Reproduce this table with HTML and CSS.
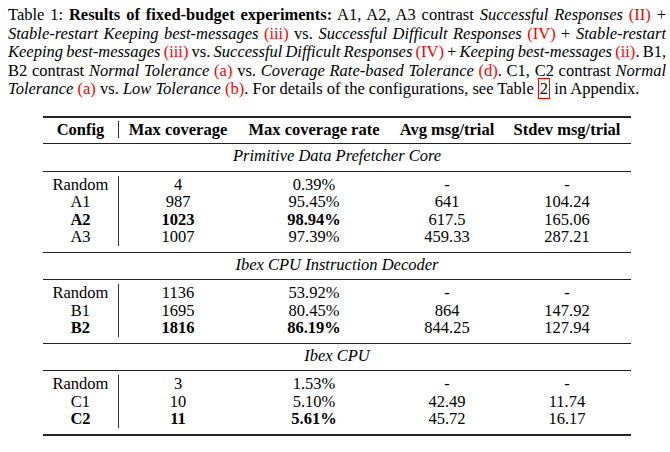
FILE: index.html
```html
<!DOCTYPE html>
<html>
<head>
<meta charset="utf-8">
<link rel="stylesheet" href="styles.css">
</head>
<body>
<div class="caption">
  <span class="line">Table 1: <b>Results of fixed-budget experiments:</b> A1, A2, A3 contrast <i>Successful Responses</i> <span class="ref">(II)</span> +</span>
  <span class="line"><i>Stable-restart Keeping best-messages</i> <span class="ref">(iii)</span> vs. <i>Successful Difficult Responses</i> <span class="ref">(IV)</span> + <i>Stable-restart</i></span>
  <span class="line"><i>Keeping best-messages</i> <span class="ref">(iii)</span> vs. <i>Successful Difficult Responses</i> <span class="ref">(IV)</span> + <i>Keeping best-messages</i> <span class="ref">(ii)</span>. B1,</span>
  <span class="line">B2 contrast <i>Normal Tolerance</i> <span class="ref">(a)</span> vs. <i>Coverage Rate-based Tolerance</i> <span class="ref">(d)</span>. C1, C2 contrast <i>Normal</i></span>
  <span class="line last"><i>Tolerance</i> <span class="ref">(a)</span> vs. <i>Low Tolerance</i> <span class="ref">(b)</span>. For details of the configurations, see Table <span class="box">2</span> in Appendix.</span>
</div>

<div class="tbl">
  <div class="grid head">
    <div class="c first">Config</div>
    <div class="c">Max coverage</div>
    <div class="c">Max coverage rate</div>
    <div class="c">Avg msg/trial</div>
    <div class="c">Stdev msg/trial</div>
  </div>

  <div class="sect">Primitive Data Prefetcher Core</div>
  <div class="grid block">
    <div class="c first">Random</div><div class="c">4</div><div class="c">0.39%</div><div class="c">-</div><div class="c">-</div>
    <div class="c first">A1</div><div class="c">987</div><div class="c">95.45%</div><div class="c">641</div><div class="c">104.24</div>
    <div class="c first b">A2</div><div class="c b">1023</div><div class="c b">98.94%</div><div class="c">617.5</div><div class="c">165.06</div>
    <div class="c first">A3</div><div class="c">1007</div><div class="c">97.39%</div><div class="c">459.33</div><div class="c">287.21</div>
  </div>

  <div class="sect">Ibex CPU Instruction Decoder</div>
  <div class="grid block">
    <div class="c first">Random</div><div class="c">1136</div><div class="c">53.92%</div><div class="c">-</div><div class="c">-</div>
    <div class="c first">B1</div><div class="c">1695</div><div class="c">80.45%</div><div class="c">864</div><div class="c">147.92</div>
    <div class="c first b">B2</div><div class="c b">1816</div><div class="c b">86.19%</div><div class="c">844.25</div><div class="c">127.94</div>
  </div>

  <div class="sect">Ibex CPU</div>
  <div class="grid block lastblock">
    <div class="c first">Random</div><div class="c">3</div><div class="c">1.53%</div><div class="c">-</div><div class="c">-</div>
    <div class="c first">C1</div><div class="c">10</div><div class="c">5.10%</div><div class="c">42.49</div><div class="c">11.74</div>
    <div class="c first b">C2</div><div class="c b">11</div><div class="c b">5.61%</div><div class="c">45.72</div><div class="c">16.17</div>
  </div>
</div>
</body>
</html>
```

FILE: styles.css
```css
html, body {
  margin: 0;
  padding: 0;
  background: #fff;
}
body {
  margin: 0 4px 0 8px;
  font-family: "Liberation Serif", "Times New Roman", serif;
  font-size: 16.5px;
  color: #000;
}
.caption {
  padding-top: 6px;
  line-height: 18.5px;
}
.line {
  display: block;
  white-space: nowrap;
  word-spacing: -1.5px;
  text-align: justify;
  text-align-last: justify;
}
.line.last {
  word-spacing: 0;
  text-align-last: left;
}
.ref {
  color: #ff0000;
}
.box {
  border: 1px solid #ff0000;
  padding: 0 1px;
}
.tbl {
  width: 588px;
  margin: 17px auto 0;
  border-top: 2px solid #222;
  border-bottom: 2px solid #222;
  line-height: 17.5px;
}
.grid {
  display: grid;
  grid-template-columns: 76px 118px 154px 112px 128px;
}
.c {
  text-align: center;
}
.first {
  border-right: 1px solid #333;
}
.b {
  font-weight: bold;
}
.head {
  padding: 3px 0 5px;
  font-weight: bold;
  border-bottom: 1px solid #222;
}
.sect {
  padding: 3px 0 6px;
  text-align: center;
  font-style: italic;
  border-bottom: 1px solid #222;
}
.block {
  padding: 4px 0 6px;
  border-bottom: 1px solid #222;
}
.block.lastblock {
  border-bottom: none;
}
```
